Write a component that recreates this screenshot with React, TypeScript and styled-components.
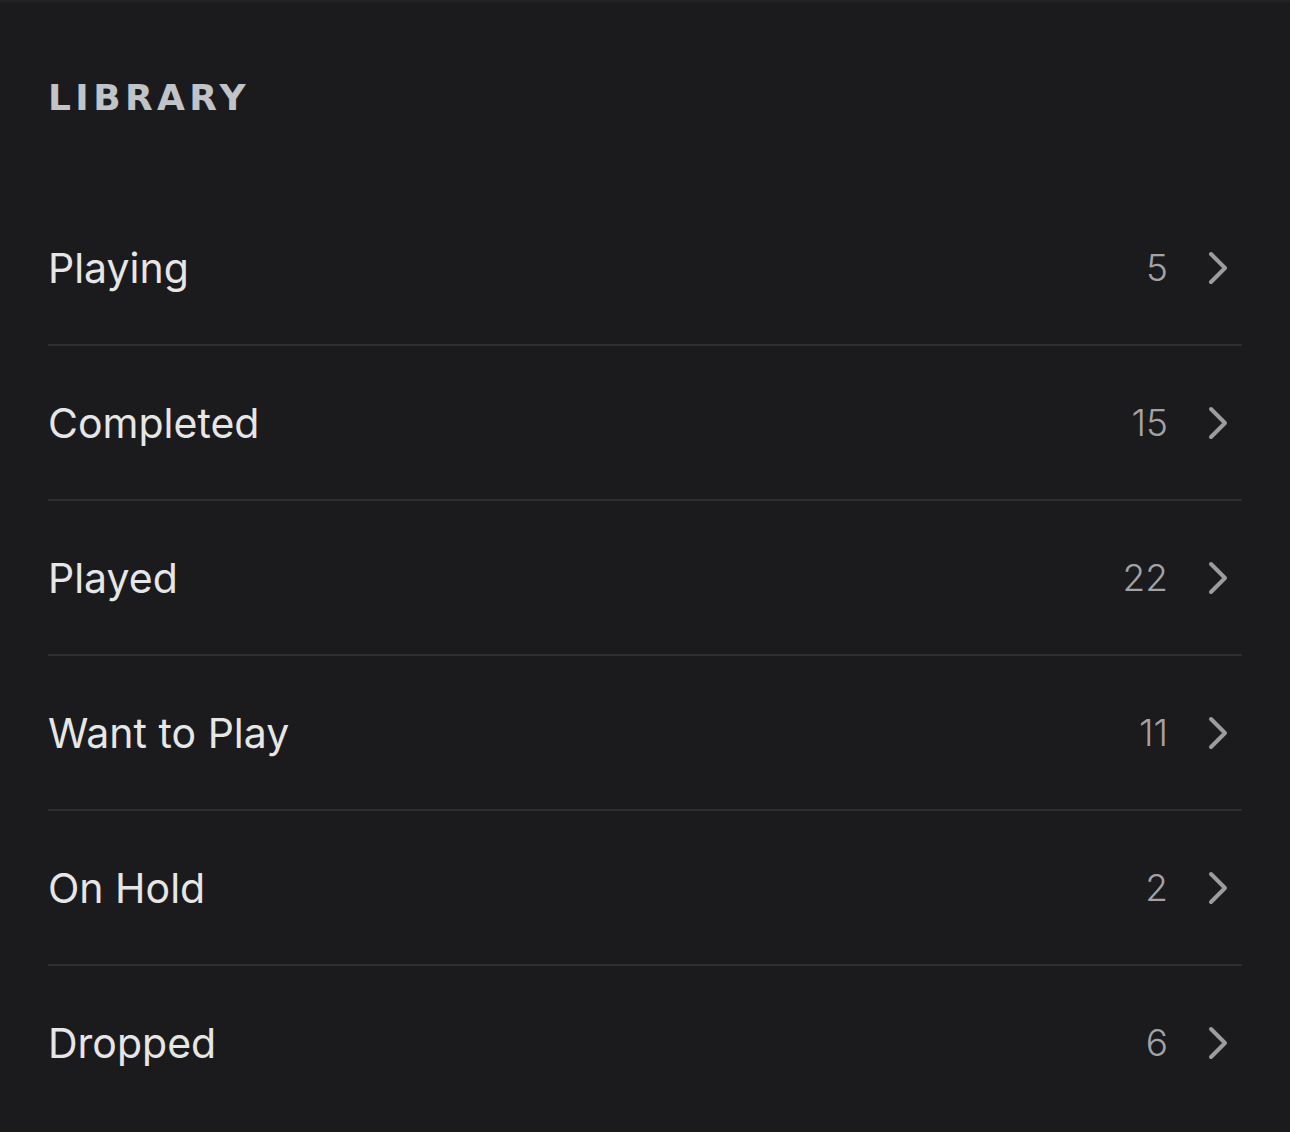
import React from "react";
import styled, { createGlobalStyle } from "styled-components";

const Global = createGlobalStyle`
  html, body { margin: 0; padding: 0; background: #1b1b1d; }
  body { font-family: Inter, "Noto Sans", sans-serif; }
`;

const Page = styled.div`
  box-sizing: border-box;
  min-height: 1132px;
  background: #1b1b1d;
  border-top: 2px solid #222224;
  padding: 66px 48px 0;
`;

const Title = styled.h2`
  margin: 0 0 63px;
  height: 60px;
  line-height: 60px;
  font-family: "DejaVu Sans", Inter, sans-serif;
  font-weight: 700;
  font-size: 36px;
  letter-spacing: 4.4px;
  color: #c0c3c8;
`;

const List = styled.ul`
  list-style: none;
  margin: 0;
  padding: 0;
`;

const Row = styled.li<{ $last?: boolean }>`
  display: flex;
  align-items: center;
  height: 153px;
  border-bottom: 2px solid ${(p) => (p.$last ? "transparent" : "#2e2e30")};
`;

const Label = styled.span`
  flex: 1;
  font-size: 41px;
  font-weight: 400;
  color: #e6e6e7;
`;

const Count = styled.span`
  font-size: 37px;
  font-weight: 350;
  color: #a3a3a6;
  margin-right: 32px;
`;

const Chevron = styled.svg`
  width: 30px;
  height: 34px;
  margin-right: 12px;
  display: block;
`;

const items: [string, number][] = [
  ["Playing", 5],
  ["Completed", 15],
  ["Played", 22],
  ["Want to Play", 11],
  ["On Hold", 2],
  ["Dropped", 6],
];

export default function App() {
  return (
    <>
      <Global />
      <Page>
        <Title>LIBRARY</Title>
        <List>
          {items.map(([name, n], i) => (
            <Row key={name} $last={i === items.length - 1}>
              <Label>{name}</Label>
              <Count>{n}</Count>
              <Chevron viewBox="0 0 30 34">
                <polyline
                  points="11,3 25,17 11,31"
                  fill="none"
                  stroke="#9c9c9f"
                  strokeWidth="4"
                  strokeLinecap="round"
                  strokeLinejoin="round"
                />
              </Chevron>
            </Row>
          ))}
        </List>
      </Page>
    </>
  );
}
